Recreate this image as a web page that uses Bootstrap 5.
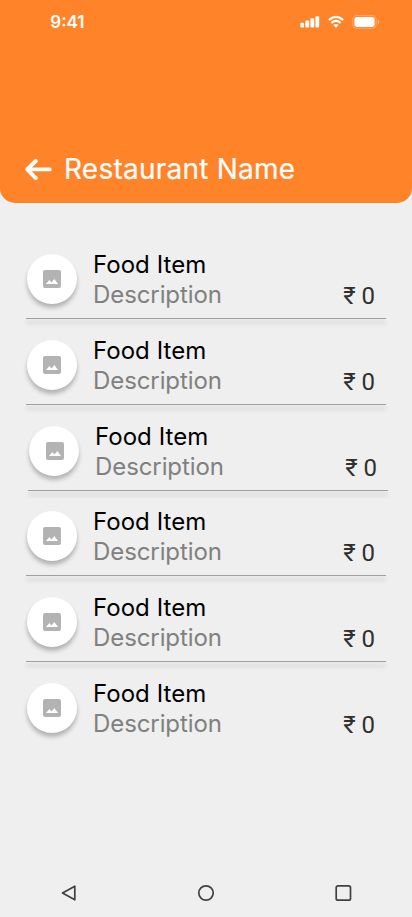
<!DOCTYPE html>
<html lang="en">
<head>
<meta charset="utf-8">
<meta name="viewport" content="width=device-width, initial-scale=1">
<title>Restaurant Name</title>
<link href="https://cdn.jsdelivr.net/npm/bootstrap@5.3.0/dist/css/bootstrap.min.css" rel="stylesheet">
<style>
body{background:#efefef;font-family:Inter,sans-serif;height:917px;overflow:hidden}
svg{display:block;flex:none}
.hero{background:#ff8429;height:203px;border-radius:0 0 15px 15px}
.status{height:44px;padding:0 32px 0 50.3px}
.clock{font-size:17px;font-weight:600;line-height:20px}
.hero-title{font-size:28px;line-height:34px;font-weight:400;letter-spacing:.24px;-webkit-text-stroke:.2px #fff}
.hero-bar{padding:0 24px 17px;gap:12px}
.menu{padding-top:30px}
.food{width:360px;height:85px;margin-left:26px;padding:21px 11px 0 1px}
.food.shifted,.shifted + .rule{margin-left:28px}
.food.tight{height:84px;padding-top:20px}
.rule{width:360px;height:1px;margin-left:26px;background:#a0a0a0;box-shadow:0 4px 4px rgba(0,0,0,.25)}
.thumb{width:50px;height:50px;background:#fff;box-shadow:0 4px 4px rgba(0,0,0,.25)}
.shifted .thumb{padding-left:2px}
.copy{margin:-4px 0 0 16px;font-size:24px;line-height:30px;color:#000;letter-spacing:.04px}
.desc{color:#808080;letter-spacing:-.09px}
.price{font-family:Roboto,sans-serif;font-size:24px;line-height:30px;color:#303030;margin-top:27px}
.sysnav{height:48px}
</style>
<script src="https://cdn.jsdelivr.net/npm/bootstrap@5.3.0/dist/js/bootstrap.bundle.min.js"></script>
</head>
<body class="d-flex flex-column">
<svg width="0" height="0" class="position-absolute" aria-hidden="true"><symbol id="photo" viewBox="0 0 18 18"><path fill="#b3b3b3" fill-rule="evenodd" d="M2 0H16Q18 0 18 2V16Q18 18 16 18H2Q0 18 0 16V2Q0 0 2 0ZM3 14H15L11.3 9L8.6 12.5L6.3 10Z"/></symbol></svg>
<header class="hero text-white d-flex flex-column justify-content-between">
  <div class="status d-flex align-items-center justify-content-between">
    <span class="clock">9:41</span>
    <svg width="80" height="14" viewBox="300 15 80 14" fill="#fff"><rect x="300.3" y="22.7" width="3.8" height="4.8" rx="1"/><rect x="305.4" y="20.5" width="3.8" height="7" rx="1"/><rect x="310.4" y="18.3" width="3.8" height="9.2" rx="1"/><rect x="315.4" y="16.2" width="3.8" height="11.3" rx="1"/>
      <g fill="none" stroke="#fff" stroke-width="2.1"><path d="M328.8 20.1Q336 13.8 343.2 20.1"/><path d="M331.3 22.9Q336 18.8 340.7 22.9"/></g><path d="M333.3 25Q336 23 338.7 25L336 27.7Z"/>
      <rect x="352.8" y="15.7" width="23.4" height="12.6" rx="4" fill="none" stroke="#fff" stroke-opacity=".3"/><rect x="354.4" y="17.1" width="20.2" height="9.8" rx="2.8"/><path d="M377.8 19.8Q379.5 20.5 379.5 22T377.8 24.2Z" opacity=".4"/></svg>
  </div>
  <div class="hero-bar d-flex align-items-center">
    <svg width="28" height="24" viewBox="24 157 28 24" fill="none" stroke="#fff" stroke-width="3.9" stroke-linecap="round" stroke-linejoin="round"><path d="M49.7 169.4H28M35.8 161L27.2 169.4L35.8 178.2"/></svg>
    <h1 class="hero-title mb-0">Restaurant Name</h1>
  </div>
</header>
<main class="menu flex-grow-1">
  <article class="food d-flex"><div class="thumb rounded-circle d-flex align-items-center justify-content-center"><svg width="18" height="18"><use href="#photo"/></svg></div><div class="copy flex-grow-1"><div>Food Item</div><div class="desc">Description</div></div><div class="price">₹ 0</div></article>
  <div class="rule"></div>
  <article class="food d-flex"><div class="thumb rounded-circle d-flex align-items-center justify-content-center"><svg width="18" height="18"><use href="#photo"/></svg></div><div class="copy flex-grow-1"><div>Food Item</div><div class="desc">Description</div></div><div class="price">₹ 0</div></article>
  <div class="rule"></div>
  <article class="food shifted d-flex"><div class="thumb rounded-circle d-flex align-items-center justify-content-center"><svg width="18" height="18"><use href="#photo"/></svg></div><div class="copy flex-grow-1"><div>Food Item</div><div class="desc">Description</div></div><div class="price">₹ 0</div></article>
  <div class="rule"></div>
  <article class="food tight d-flex"><div class="thumb rounded-circle d-flex align-items-center justify-content-center"><svg width="18" height="18"><use href="#photo"/></svg></div><div class="copy flex-grow-1"><div>Food Item</div><div class="desc">Description</div></div><div class="price">₹ 0</div></article>
  <div class="rule"></div>
  <article class="food d-flex"><div class="thumb rounded-circle d-flex align-items-center justify-content-center"><svg width="18" height="18"><use href="#photo"/></svg></div><div class="copy flex-grow-1"><div>Food Item</div><div class="desc">Description</div></div><div class="price">₹ 0</div></article>
  <div class="rule"></div>
  <article class="food d-flex"><div class="thumb rounded-circle d-flex align-items-center justify-content-center"><svg width="18" height="18"><use href="#photo"/></svg></div><div class="copy flex-grow-1"><div>Food Item</div><div class="desc">Description</div></div><div class="price">₹ 0</div></article>
</main>
<footer class="sysnav row g-0 align-items-center">
  <div class="col d-flex justify-content-center"><svg width="18" height="18" fill="none" stroke="#404040" stroke-width="1.7" stroke-linejoin="round"><path d="M2.5 9L14.8 2.2V15.8Z"/></svg></div>
  <div class="col d-flex justify-content-center"><svg width="18" height="18" fill="none" stroke="#404040" stroke-width="1.7"><circle cx="9" cy="9" r="7.2"/></svg></div>
  <div class="col d-flex justify-content-center"><svg width="18" height="18" fill="none" stroke="#404040" stroke-width="1.7"><rect x="2.2" y="1.9" width="14.3" height="14.3" rx="1.8"/></svg></div>
</footer>
</body>
</html>
